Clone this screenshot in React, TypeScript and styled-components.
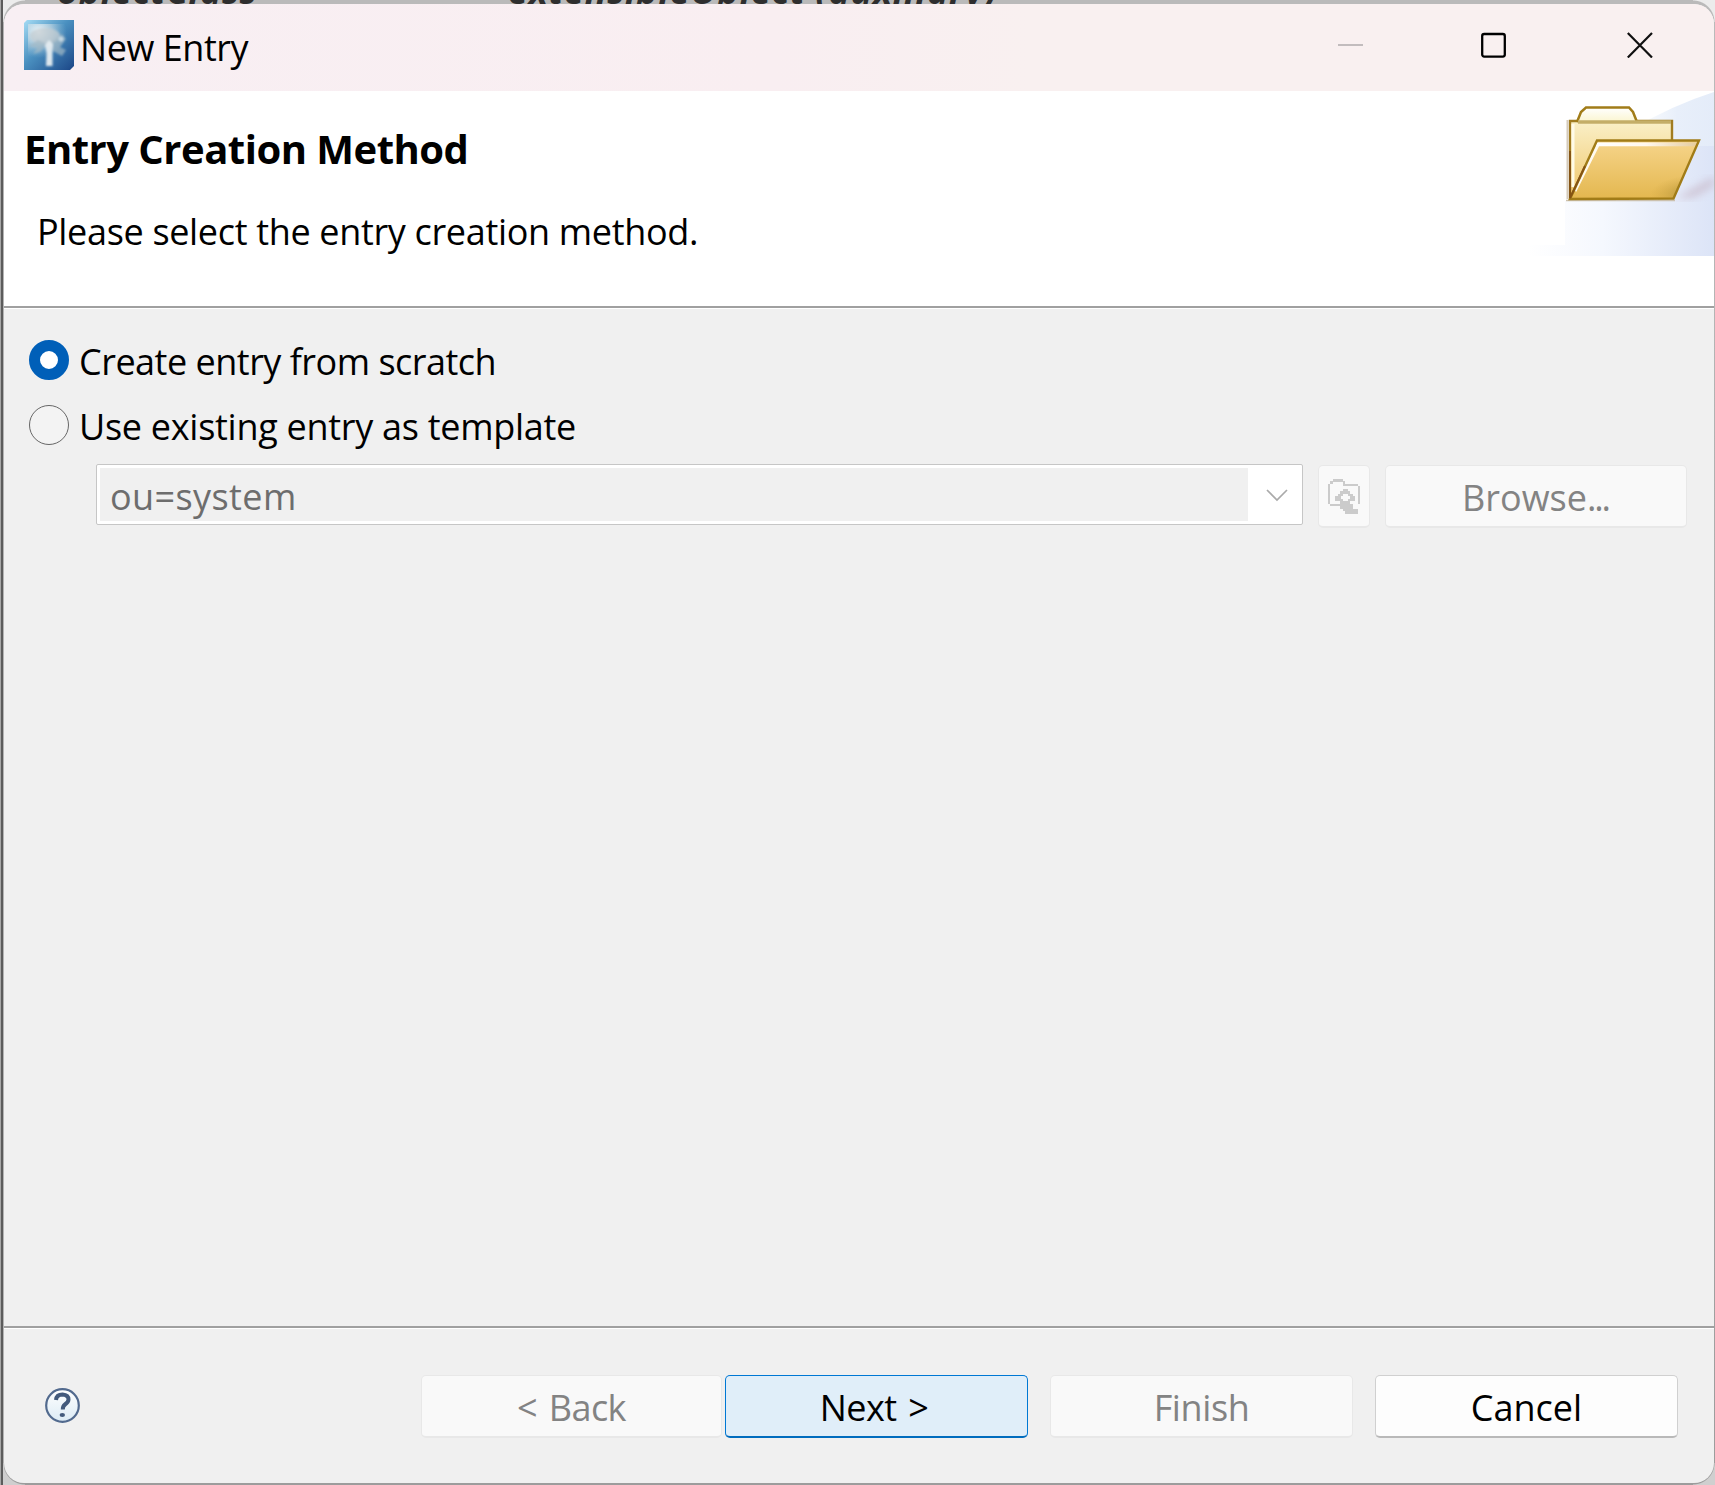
import React from "react";
import styled, { createGlobalStyle, css } from "styled-components";

const Global = createGlobalStyle`
  * { box-sizing: border-box; }
  html, body { margin: 0; padding: 0; overflow: hidden; }
  body { font-family: "Open Sans", "Noto Sans", sans-serif; font-size: 36px; color: #000; }
`;

const Desktop = styled.div`
  position: relative;
  width: 1715px;
  height: 1485px;
  padding: 4px 1px 2px 4px;
  overflow: hidden;
  background: linear-gradient(90deg, #a8a8a8 0 1px, #5c5c5c 1px 3px, #b4b4b4 3px 4px, transparent 4px),
    linear-gradient(180deg, #bababa 0 40px, #9c9c9c 100%);
`;

const Behind = styled.span<{ $x: number; $ls: number }>`
  position: absolute;
  left: ${(p) => p.$x}px;
  top: -31px;
  font: italic 700 36px/44px "Open Sans", sans-serif;
  letter-spacing: ${(p) => p.$ls}px;
  white-space: nowrap;
  color: #2e2e2e;
`;

const Corner = styled.i<{ $right?: boolean; $bottom?: boolean }>`
  position: absolute;
  width: 22px;
  height: 22px;
  ${(p) => (p.$right ? "right: 0;" : "left: 3px;")}
  ${(p) => (p.$bottom ? "bottom: 0;" : "top: 0;")}
  background: radial-gradient(
    circle at ${(p) => (p.$right ? "0" : "100%")} ${(p) => (p.$bottom ? "0" : "100%")},
    transparent 21px,
    ${(p) => (p.$bottom ? "#cfcfcf" : "#ececec")} 22px
  );
`;

const Window = styled.main`
  position: relative;
  height: 100%;
  display: flex;
  flex-direction: column;
  border-radius: 20px;
  overflow: hidden;
  background: #f0f0f0;
`;

const Label = styled.span<{ $ls?: number; $ws?: number }>`
  letter-spacing: ${(p) => p.$ls ?? 0}px;
  word-spacing: ${(p) => p.$ws ?? 0}px;
  white-space: pre;
  line-height: 48px;
`;

const TitleBar = styled.header`
  height: 87px;
  flex: none;
  display: flex;
  align-items: flex-start;
  padding: 16px 61px 0 20px;
  background: linear-gradient(90deg, #f8eff3 0%, #f9eef1 45%, #f9f0f0 60%);
`;
const TitleText = styled(Label)`
  margin: 4px auto 0 6px;
`;
const Controls = styled.div`
  display: flex;
  gap: 118px;
  margin-top: 12px;
  svg { display: block; }
  svg:last-child { margin-left: 3px; }
`;

const Banner = styled.section`
  height: 218px;
  flex: none;
  display: flex;
  justify-content: space-between;
  background: #fff;
  border-bottom: 1px solid #fff;
  box-shadow: inset 0 -2px #a0a0a0;
`;
const BannerText = styled.div`
  display: flex;
  flex-direction: column;
  padding: 34px 0 0 20px;
`;
const Heading = styled.h1`
  margin: 0;
  font-size: 40px;
  font-weight: 700;
  line-height: 48px;
  letter-spacing: -0.5px;
  white-space: nowrap;
`;
const Description = styled(Label)`
  margin: 35px 0 0 13px;
`;

const Body = styled.section`
  flex: 1;
  display: flex;
  flex-direction: column;
  padding: 29px 26px 0 25px;
`;
const Option = styled.label`
  display: flex;
  align-items: center;
  height: 48px;
  margin-bottom: 17px;
`;
const Radio = styled.span<{ $on?: boolean }>`
  width: 40px;
  height: 40px;
  margin: -4px 10px 0 0;
  border-radius: 50%;
  ${(p) =>
    p.$on
      ? css`border: 11.5px solid #005fb8; background: #fff;`
      : css`border: 1.5px solid #666; background: #f3f3f3;`}
`;
const Source = styled.div`
  display: flex;
  align-items: flex-start;
  gap: 15px;
  margin: -4px 0 0 67px;
`;
const Combo = styled.div`
  width: 1207px;
  height: 61px;
  flex: none;
  display: flex;
  padding: 3px;
  border: 1px solid #c6c6c6;
  border-radius: 2px;
  background: #fff;
`;
const ComboValue = styled.div`
  width: 1148px;
  padding: 4px 0 0 10px;
  background: #f0f0f0;
  color: #6d6d6d;
`;
const ComboArrow = styled.svg`
  margin: 21px 0 0 18px;
`;

type Kind = "disabled" | "primary" | "normal";
const palette: Record<Kind, string> = {
  disabled: "background:#f9f9f9;color:#838383;border-color:#e8e8e8;",
  primary: "background:#e0eef9;color:#000;border-color:#0078d4;border-bottom-color:#006cbe;",
  normal: "background:#fdfdfd;color:#000;border-color:#d0d0d0;border-bottom-color:#b9b9b9;",
};
const Button = styled.button<{ $kind: Kind; $w?: number }>`
  width: ${(p) => p.$w ?? 303}px;
  height: 63px;
  flex: none;
  padding: 0;
  display: flex;
  justify-content: center;
  align-items: center;
  font: inherit;
  border: 1px solid;
  border-bottom-width: 2px;
  border-radius: 5px;
  ${(p) => palette[p.$kind]}
`;
const SourceButton = styled(Button)`
  margin-top: 1px;
`;
const ButtonLabel = styled(Label)<{ $pr?: number }>`
  padding-top: 4px;
  padding-right: ${(p) => p.$pr ?? 0}px;
`;

const Footer = styled.footer`
  height: 157px;
  flex: none;
  display: flex;
  align-items: flex-start;
  padding: 46px 36px 0 41px;
  border-top: 2px solid #a0a0a0;
  box-shadow: inset 0 1px #fff;
`;
const Help = styled.svg`
  margin: 14px auto 0 0;
`;
const Group = styled.div`
  display: flex;
  gap: 3px;
  margin-top: 1px;
`;
const Actions = styled.div`
  display: flex;
  gap: 22px;
`;

const AppIcon = () => (
  <svg width="50" height="50" viewBox="0 0 50 50">
    <defs>
      <linearGradient id="sky" x1="0" y1="0" x2="1" y2="1">
        <stop offset="0" stopColor="#a5dcf4" />
        <stop offset=".45" stopColor="#4a90c0" />
        <stop offset="1" stopColor="#1b4687" />
      </linearGradient>
      <radialGradient id="glow" cx=".25" cy=".2" r=".65">
        <stop offset="0" stopColor="#fff" stopOpacity=".9" />
        <stop offset=".5" stopColor="#cfdde4" stopOpacity=".6" />
        <stop offset="1" stopColor="#9fc0d6" stopOpacity="0" />
      </radialGradient>
      <filter id="soft"><feGaussianBlur stdDeviation="1.1" /></filter>
    </defs>
    <path d="M3 0H50V46L46 50H0V3Z" fill="url(#sky)" />
    <path d="M4 4H47V44H4Z" fill="url(#glow)" />
    <g filter="url(#soft)">
      <ellipse cx="21" cy="16" rx="15" ry="8" fill="#c4cdd2" opacity=".75" />
      <path d="M5 26L14 20L23 24L16 32L9 34L13 28ZM28 22L38 14L42 19L36 27L42 30L38 36L29 31Z" fill="#a3b9c6" opacity=".7" />
      <circle cx="37" cy="19" r="2.500" fill="#d5e4ec" opacity=".8" />
      <path d="M21 25L25 20L29 24L28.500 31L28.500 46H22L22.500 33Z" fill="#e6edf1" opacity=".95" />
    </g>
  </svg>
);

const FolderBanner = () => (
  <svg width="186" height="165" viewBox="0 0 186 165">
    <defs>
      <linearGradient id="wash"><stop offset="0" stopColor="#fff" /><stop offset=".4" stopColor="#f5f8fe" /><stop offset="1" stopColor="#dce4f7" /></linearGradient>
      <linearGradient id="swoop"><stop offset="0" stopColor="#fff" /><stop offset=".55" stopColor="#e8effa" /><stop offset="1" stopColor="#e4ecf9" /></linearGradient>
      <linearGradient id="back" x2="0" y2="1"><stop offset="0" stopColor="#faf0c8" /><stop offset="1" stopColor="#f0c566" /></linearGradient>
      <linearGradient id="front" x2="0" y2="1"><stop offset="0" stopColor="#f6d48a" /><stop offset="1" stopColor="#e4b850" /></linearGradient>
      <linearGradient id="tab" x2="0" y2="1"><stop offset="0" stopColor="#fff" /><stop offset="1" stopColor="#fbf5cf" /></linearGradient>
      <linearGradient id="edge"><stop offset="0" stopColor="#774200" /><stop offset="1" stopColor="#a17c18" /></linearGradient>
      <linearGradient id="gloss"><stop offset="0" stopColor="#fff" /><stop offset=".5" stopColor="#fff8ee" /><stop offset="1" stopColor="#e6cda0" /></linearGradient>
      <radialGradient id="shade" cx=".97" cy=".95" r=".35"><stop offset="0" stopColor="#94802f" stopOpacity=".8" /><stop offset="1" stopColor="#c69b3a" stopOpacity="0" /></radialGradient>
      <filter id="blur"><feGaussianBlur stdDeviation="4" /></filter>
    </defs>
    <path d="M104 38Q145 14 186 1V80H104Z" fill="url(#swoop)" />
    <path d="M130 55H186V165H0V154H37V110H130Z" fill="url(#wash)" />
    <path d="M147 108L186 86V94L166 106Z" fill="#c0a9b8" opacity=".6" filter="url(#blur)" />
    <path d="M38 109.500H147" stroke="#ccc1ae" strokeWidth="1.500" />
    <path d="M42 108V30H144V60" fill="url(#back)" stroke="#a17c20" strokeWidth="2.400" />
    <path d="M39.500 29V108" stroke="#d5cbbb" strokeWidth="2" />
    <path d="M45 33V96" stroke="#fffbe8" strokeWidth="3" />
    <path d="M49 31L53 21L58 16.500H101L105 21L109 31" fill="url(#tab)" stroke="#a17c18" strokeWidth="2.500" />
    <path d="M50 31H143" stroke="#c4ae68" strokeWidth="3.500" />
    <path d="M68 50H171L145 107H42Z" fill="url(#front)" />
    <path d="M68 50H171L145 107H42Z" fill="url(#shade)" />
    <path d="M47 100L70.500 53" fill="none" stroke="#fffaf0" strokeWidth="3" />
    <path d="M69 52.700H167L165.500 54H69Z" fill="none" stroke="url(#gloss)" strokeWidth="2.500" />
    <path d="M42 108L69 49.500H171L145.500 107.500Z" fill="none" stroke="#a17c18" strokeWidth="2.400" />
    <path d="M41 107H145.500" stroke="url(#edge)" strokeWidth="3" />
    <path d="M42 60V107L57 75" fill="none" stroke="#855414" strokeWidth="2" />
  </svg>
);

const BrowseIcon = () => (
  <svg width="32" height="35" viewBox="0 0 32 35">
    <g fill="#cbcbcb">
      <path d="M5 0H15V2H17V5H30V7H32V25H30V7H15V3H5V5H2V25H12V27H2V25H0V5H2V2H5Z" />
      <path d="M15 10H20V12H22V15H25V17H27V22H22V17H20V15H15V17H13V22H7V17H10V15H12V12H15Z" />
      <path d="M13 20H15V22H20V20H22V25H25V30H30V35H17V32H15V30H12V22H13Z" />
    </g>
  </svg>
);

export default function App() {
  return (
    <Desktop>
      <Global />
      <Behind $x={57} $ls={0.6}>objectClass</Behind>
      <Behind $x={508} $ls={0.7}>extensibleObject (auxiliary)</Behind>
      <Corner />
      <Corner $right />
      <Corner $bottom />
      <Corner $right $bottom />
      <Window>
        <TitleBar>
          <AppIcon />
          <TitleText $ls={-0.45}>New Entry</TitleText>
          <Controls>
            <svg width="25" height="26"><path d="M0 13H25" stroke="#c2bcbd" strokeWidth="2" /></svg>
            <svg width="25" height="26"><rect x="1.200" y="2" width="22.600" height="22.600" rx="2" fill="none" stroke="#000" strokeWidth="2.300" /></svg>
            <svg width="26" height="26"><path d="M.8 1L25 25.500M25 1L.8 25.500" stroke="#111" strokeWidth="2.200" /></svg>
          </Controls>
        </TitleBar>
        <Banner>
          <BannerText>
            <Heading>Entry Creation Method</Heading>
            <Description $ls={-0.33}>Please select the entry creation method.</Description>
          </BannerText>
          <FolderBanner />
        </Banner>
        <Body>
          <Option><Radio $on /><Label $ls={-0.5}>Create entry from scratch</Label></Option>
          <Option><Radio /><Label $ls={-0.28}>Use existing entry as template</Label></Option>
          <Source>
            <Combo>
              <ComboValue><Label $ls={0.4}>ou=system</Label></ComboValue>
              <ComboArrow width="22" height="13"><path d="M1 1L11 11L21 1" fill="none" stroke="#aaa" strokeWidth="1.700" /></ComboArrow>
            </Combo>
            <SourceButton $kind="disabled" $w={52}><BrowseIcon /></SourceButton>
            <SourceButton $kind="disabled" $w={302}>
              <ButtonLabel $pr={1}>Browse<Label $ls={-2.1}>...</Label></ButtonLabel>
            </SourceButton>
          </Source>
        </Body>
        <Footer>
          <Help width="35" height="35" viewBox="0 0 35 35">
            <defs><linearGradient id="hb" x2="0" y2="1"><stop offset="0" stopColor="#fff" /><stop offset="1" stopColor="#dcebf5" /></linearGradient></defs>
            <circle cx="17.500" cy="17.500" r="16.300" fill="url(#hb)" stroke="#526a8e" strokeWidth="2.200" />
            <path d="M11 12Q11.500 6.500 17.500 6.500Q23.500 7 23.500 11.500Q23.500 14 20 16.500Q17.800 18 17.800 21.500" fill="none" stroke="#435a7c" strokeWidth="4" />
            <ellipse cx="17.300" cy="27" rx="2.700" ry="2" fill="#435a7c" />
          </Help>
          <Actions>
            <Group>
              <Button $kind="disabled" $w={301}><ButtonLabel $ls={-0.6} $ws={3}>{"< Back"}</ButtonLabel></Button>
              <Button $kind="primary"><ButtonLabel $ls={-0.6} $ws={3} $pr={5}>{"Next >"}</ButtonLabel></Button>
            </Group>
            <Group><Button $kind="disabled"><ButtonLabel $ls={-0.4}>Finish</ButtonLabel></Button></Group>
            <Group><Button $kind="normal"><ButtonLabel>Cancel</ButtonLabel></Button></Group>
          </Actions>
        </Footer>
      </Window>
    </Desktop>
  );
}
